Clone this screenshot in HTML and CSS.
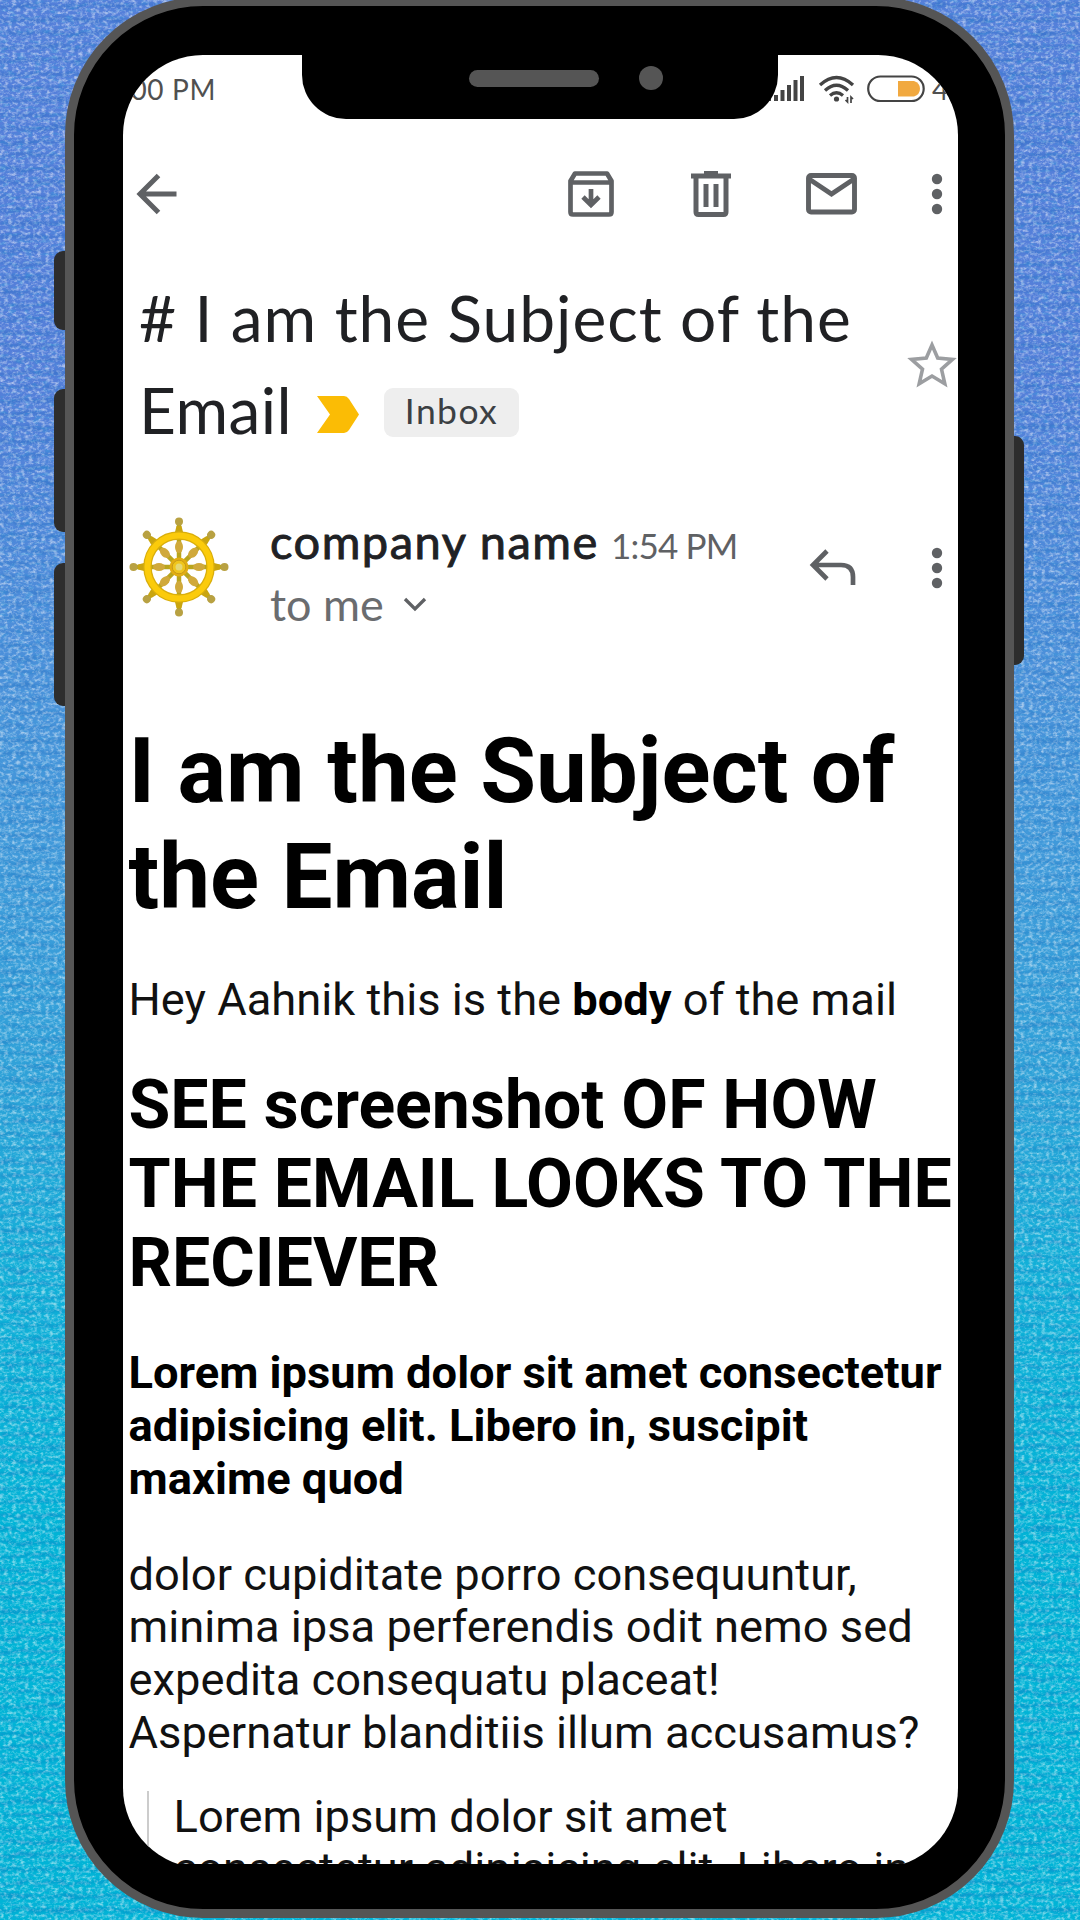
FILE: index.html
```html
<!DOCTYPE html>
<html lang="en">
<head>
<meta charset="utf-8">
<title>Email preview</title>
<link rel="stylesheet" href="styles.css">
</head>
<body>
<div class="stage">
  <svg class="fabric" width="1080" height="1920" aria-hidden="true">
    <filter id="weave" x="0" y="0" width="100%" height="100%">
      <feTurbulence type="fractalNoise" baseFrequency="0.24 0.34" numOctaves="3" seed="4"/>
      <feColorMatrix type="matrix" values="0 0 0 0 1  0 0 0 0 1  0 0 0 0 1  2.6 0 0 0 -1.1"/>
    </filter>
    <filter id="shade" x="0" y="0" width="100%" height="100%">
      <feTurbulence type="fractalNoise" baseFrequency="0.12 0.3" numOctaves="4" seed="11"/>
      <feColorMatrix type="matrix" values="0 0 0 0 0.03  0 0 0 0 0.35  0 0 0 0 0.72  0 3 0 0 -1.5"/>
    </filter>
    <filter id="thread" x="0" y="0" width="100%" height="100%">
      <feTurbulence type="fractalNoise" baseFrequency="0.06 0.1" numOctaves="3" seed="7"/>
      <feDisplacementMap in="SourceGraphic" scale="9" xChannelSelector="R" yChannelSelector="G"/>
      <feGaussianBlur stdDeviation="0.9"/>
    </filter>
    <pattern id="rows" width="1080" height="13.600" patternUnits="userSpaceOnUse">
      <path d="M0 6h1080" stroke="#0a5fb4" stroke-width="2.600"/>
    </pattern>
    <rect width="1080" height="1920" filter="url(#weave)" opacity=".5"/>
    <rect width="1080" height="1920" filter="url(#shade)" opacity=".34"/>
    <rect width="1080" height="1920" fill="url(#rows)" filter="url(#thread)" opacity=".3"/>
  </svg>
  <span class="key key-mute"></span>
  <span class="key key-up"></span>
  <span class="key key-down"></span>
  <span class="key key-power"></span>
  <div class="phone">
    <div class="viewport">
      <div class="screen">
        <div class="statusbar">
          <span class="clock">2:00 PM</span>
          <span class="indicators">
            <svg class="signal" width="42" height="28" viewBox="0 0 42 28" fill="#444"><path d="M4 22h4v4H4zM11 20h4v6h-4zM17.500 15h4v11h-4zM24 10h4v16h-4zM30.500 5h4v21h-4zM37 1h4v25h-4z"/></svg>
            <svg class="wifi" width="38" height="30" viewBox="0 0 38 30" fill="none" stroke="#444" stroke-width="3.300"><path d="M2 10Q18.500-5 35 10M7 15.500Q18.500 5 30 15.500M12 20.500Q18.500 15 25 20.500"/><circle cx="18.500" cy="24" r="2.600" fill="#444" stroke="none"/><path d="M29.500 22v5l-2-2M33 28v-6l2 2" stroke-width="1.700"/></svg>
            <svg class="battery" width="58" height="28" viewBox="0 0 58 28"><rect x="1.200" y="1.500" width="55.500" height="24.500" rx="12.200" fill="#fff" stroke="#444" stroke-width="2.200"/><path d="M31 6h16q6 2 6 7.700t-6 7.800H31z" fill="#f1a940"/></svg>
            <span class="level">4</span>
          </span>
        </div>
        <div class="toolbar">
          <svg class="back" width="42" height="42" viewBox="0 0 42 42" fill="none" stroke="#5f6164" stroke-width="5"><path d="M40.500 21H5M22.500 2.500L4 21l18.500 18.500"/></svg>
          <svg class="archive" width="46" height="46" viewBox="0 0 46 46" fill="none" stroke="#5f6164" stroke-width="4.700" stroke-linejoin="round"><path d="M2.500 10L7 2.500h32L43.500 10v31q0 2.500-2.500 2.500H5Q2.500 43.500 2.500 41zM3 11.500h40"/><path d="M23 18v16M15 26l8 8 8-8" stroke-linejoin="miter"/></svg>
          <svg class="trash" width="40" height="46" viewBox="0 0 40 46" fill="none" stroke="#5f6164" stroke-width="5"><path d="M0 5h40M13 2.500h14M5 6v35q0 2.500 2.500 2.500h25q2.500 0 2.500-2.500V6M15 13v23M25 13v23"/></svg>
          <svg class="mail" width="51" height="42" viewBox="0 0 51 42" fill="none" stroke="#5f6164" stroke-width="4.900"><rect x="2.500" y="2.500" width="46" height="36.500" rx="2.500"/><path d="M3 6l22.500 15L48 6"/></svg>
          <svg class="more" width="12" height="42" viewBox="0 0 12 42" fill="#5f6164"><circle cx="6" cy="6" r="5.200"/><circle cx="6" cy="21" r="5.200"/><circle cx="6" cy="36" r="5.200"/></svg>
        </div>
        <div class="subject">
          <div class="subject-text">
            <div class="subject-line first"># I am the Subject of the</div>
            <div class="subject-line">
              <span class="second">Email</span>
              <svg class="important" width="42" height="37" viewBox="0 0 42 37"><path d="M0 0h27q3 0 5 3l10 15.500L32 34q-2 3-5 3H0l13-18.500z" fill="#fbbc05"/></svg>
              <span class="chip">Inbox</span>
            </div>
          </div>
          <svg class="star" width="50" height="48" viewBox="0 0 50 48" fill="none" stroke="#9c9ea1" stroke-width="3.600"><path d="M25 5l5.700 13 14.800 1.400-11 9.800 3.300 14.500L25 36l-12.800 7.700 3.300-14.500-11-9.800L19.300 18z"/></svg>
        </div>
        <div class="sender">
          <svg class="avatar" width="100" height="100" viewBox="-50 -50 100 100">
            <defs>
              <g id="spoke">
                <path d="M0-47V-8" stroke="#b9a51c" stroke-width="4.500"/>
                <circle cy="-45.500" r="4" fill="#b8a142"/>
                <path d="M-2.500-41h5l1.500 6h-8z" fill="#c9a510"/>
                <ellipse cy="-20" rx="4" ry="6" fill="#d0a93b"/>
              </g>
            </defs>
            <use href="#spoke"/><use href="#spoke" transform="rotate(45)"/><use href="#spoke" transform="rotate(90)"/><use href="#spoke" transform="rotate(135)"/><use href="#spoke" transform="rotate(180)"/><use href="#spoke" transform="rotate(225)"/><use href="#spoke" transform="rotate(270)"/><use href="#spoke" transform="rotate(315)"/>
            <circle r="31.500" fill="none" stroke="#d9ae0c" stroke-width="8.500"/>
            <circle r="31.500" fill="none" stroke="#fbcb0b" stroke-width="6"/>
            <circle r="9.500" fill="#e3ae12"/><circle r="6.800" fill="#efc51c" stroke="#c99a17" stroke-width="1"/><circle r="3.500" fill="#e5d873"/>
          </svg>
          <div class="who">
            <div class="who-line"><span class="name">company name</span><span class="time">1:54 PM</span></div>
            <div class="to-line"><span class="to">to me</span><svg class="chevron" width="24" height="16" viewBox="0 0 24 16" fill="none" stroke="#5f6164" stroke-width="3.300"><path d="M2 2l10 10L22 2"/></svg></div>
          </div>
          <svg class="reply" width="48" height="38" viewBox="0 0 48 38" fill="none" stroke="#5f6164" stroke-width="4.700"><path d="M18 3L4 17l14 14M4 17h28q12 0 12 12v8"/></svg>
          <svg class="more" width="12" height="42" viewBox="0 0 12 42" fill="#5f6164"><circle cx="6" cy="6" r="5.200"/><circle cx="6" cy="21" r="5.200"/><circle cx="6" cy="36" r="5.200"/></svg>
        </div>
        <div class="message">
          <h1>I am the Subject of<br>the Email</h1>
          <p class="intro">Hey Aahnik this is the <b>body</b> of the mail</p>
          <h2>SEE screenshot OF HOW<br>THE EMAIL LOOKS TO THE<br>RECIEVER</h2>
          <h4>Lorem ipsum dolor sit amet consectetur<br>adipisicing elit. Libero in, suscipit<br>maxime quod</h4>
          <p class="copy">dolor cupiditate porro consequuntur,<br>minima ipsa perferendis odit nemo sed<br>expedita consequatu placeat!<br>Aspernatur blanditiis illum accusamus?</p>
          <blockquote>Lorem ipsum dolor sit amet<br>consectetur adipisicing elit. Libero in,</blockquote>
        </div>
      </div>
    </div>
    <div class="notch"><span class="speaker"></span><span class="camera"></span></div>
  </div>
</div>
</body>
</html>
```
FILE: styles.css
```css
* { box-sizing: border-box; }
body { margin: 0; }
svg { display: block; flex: none; }

.stage {
  position: relative;
  width: 1080px;
  height: 1920px;
  overflow: hidden;
  background: linear-gradient(#5580da 0, #557fd9 20%, #4b92da 36%, #409bda 46%, #2fa2d8 56%, #12b0d8 66%, #00b4d6 80%, #00b4d6 100%);
}
.fabric { position: absolute; inset: 0; }

.key { position: absolute; background: #2d2d2d; border-radius: 9px; }
.key-mute { left: 54px; top: 251px; width: 24px; height: 79px; }
.key-up { left: 54px; top: 389px; width: 24px; height: 143px; }
.key-down { left: 54px; top: 563px; width: 24px; height: 143px; }
.key-power { left: 1000px; top: 436px; width: 24px; height: 229px; }

.phone {
  position: relative;
  width: 949px;
  height: 1921px;
  margin: -3px 0 0 65px;
  border: 9px solid #555;
  border-radius: 138px;
  background: #000;
  padding: 49px 0 0 49px;
}
.viewport { width: 835px; height: 1809px; overflow: hidden; }
.screen {
  width: 835px;
  height: 1813px;
  overflow: hidden;
  border-radius: 80px;
  background: #fff;
  font-family: Lato, sans-serif;
  color: #202124;
}
.notch {
  position: absolute;
  left: 228px;
  top: 47px;
  width: 476px;
  height: 66px;
  border-radius: 0 0 44px 44px;
  background: #000;
  display: flex;
  padding: 17px 0 0 167px;
  gap: 40px;
}
.speaker { width: 130px; height: 17px; border-radius: 9px; background: #555; }
.camera { width: 24px; height: 24px; margin-top: -4px; border-radius: 50%; background: #555; }

.statusbar { display: flex; justify-content: space-between; height: 64px; padding-top: 16px; color: #505050; }
.clock { width: 93px; display: flex; justify-content: flex-end; font-size: 28px; line-height: 36px; letter-spacing: .6px; white-space: nowrap; }
.indicators { display: flex; height: 36px; padding-top: 4px; }
.wifi { margin-left: 13px; }
.battery { margin-left: 11px; }
.level { width: 33px; padding-left: 7px; font-size: 29px; line-height: 28px; }

.toolbar { display: flex; align-items: center; height: 150px; padding: 0 15px 0 13px; }
.archive { margin-left: 390px; }
.trash { margin-left: 77px; }
.mail { margin-left: 75px; }
.toolbar .more { margin-left: auto; }

.subject { display: flex; height: 208px; }
.subject-text { width: 784px; padding: 3px 0 0 16px; }
.subject-line { display: flex; align-items: center; height: 92px; font-size: 64px; line-height: 92px; letter-spacing: 1px; white-space: nowrap; }
.second { width: 178px; letter-spacing: .4px; }
.important { margin-top: 9px; }
.chip { width: 135px; height: 49px; margin: 4px 0 0 25px; border-radius: 9px; background: #eee; color: #3c4043; font-size: 35.500px; line-height: 46px; letter-spacing: 1.400px; text-align: center; }
.star { margin-top: 71px; }

.sender { display: flex; height: 180px; padding: 39px 15px 0 6px; }
.avatar { margin-top: 1px; }
.who { flex: none; width: 541px; margin-top: -5px; padding-left: 41px; white-space: nowrap; }
.who-line { display: flex; align-items: baseline; height: 60px; line-height: 60px; }
.name { flex: none; width: 341px; font-size: 47px; letter-spacing: 1.500px; -webkit-text-stroke: .9px #202124; }
.time { font-size: 35px; letter-spacing: -.8px; color: #5f6164; }
.to-line { display: flex; align-items: center; height: 66px; color: #6a6c6f; }
.to { width: 133px; font-size: 45px; }
.chevron { margin-top: 2px; }
.reply { margin: 32px 0 0 39px; }
.sender .more { margin: 31px 0 0 auto; }

.message { padding-left: 5.500px; font-family: Roboto, sans-serif; font-size: 45.280px; line-height: 52.800px; color: #111; white-space: nowrap; }
.message h1, .message h2, .message h4, .message b { font-weight: 700; color: #000; }
.message h1 { margin: 61px 0 43.500px; font-size: 90.700px; line-height: 106.400px; }
.message p { margin: 0; }
.message h2 { margin: 39px 0 44px; font-size: 68px; line-height: 79px; }
.message h4 { margin: 0 0 43px; font-size: 45.280px; }
.message blockquote { margin: 31px 0 0 18px; padding-left: 25px; border-left: 2px solid #ccc; }
```
